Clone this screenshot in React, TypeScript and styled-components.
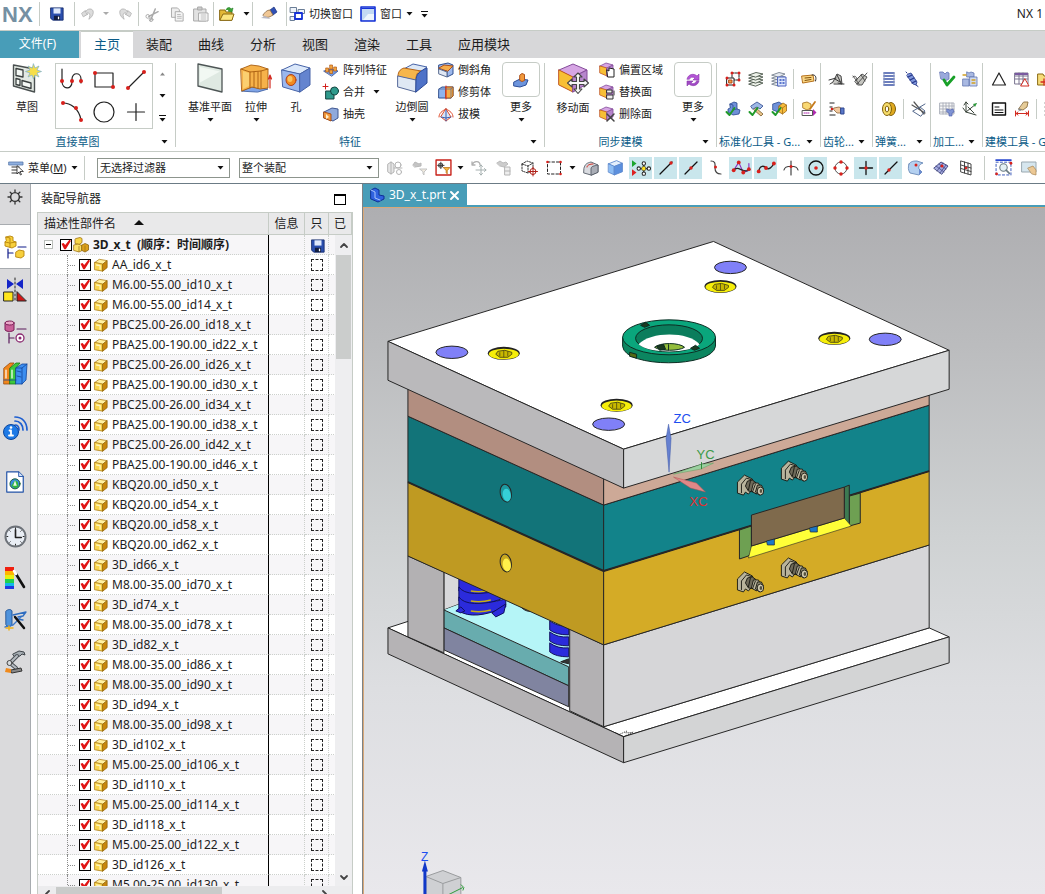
import React from "react";
import styled, { createGlobalStyle, css } from "styled-components";

const c = {
  line: "#c6ccc6",
  chrome: "#d7d7d9",
  teal: "#489db8",
  link: "#0b5c88",
  ink: "#1c1c1c",
  hot: "#c9e6ec",
};

const Global = createGlobalStyle`
  *, *::before, *::after { box-sizing: border-box; }
  body {
    margin: 0;
    background: #fff;
    color: ${c.ink};
    font: 12px/16px "Noto Sans", "Noto Sans CJK SC", sans-serif;
  }
  button, select, input { font: inherit; color: inherit; }
`;

const Shell = styled.div`
  display: flex;
  flex-direction: column;
  height: 100vh;
  overflow: hidden;
`;

const bare = css`
  border: 0;
  padding: 0;
  margin: 0;
  background: none;
  cursor: pointer;
`;

/* ---------- icons ---------- */

const Svg = styled.svg`
  display: block;
  flex: none;
  overflow: visible;
`;

const Ic = ({ s = 16, w, box = 16, boxW, children }: { s?: number; w?: number; box?: number; boxW?: number; children: React.ReactNode }) => (
  <Svg width={w ?? s} height={s} viewBox={`0 0 ${boxW ?? box} ${box}`} fill="none" strokeLinecap="round" strokeLinejoin="round" aria-hidden>
    {children}
  </Svg>
);

const Down = ({ line }: { line?: boolean }) => (
  <Svg width={7} height={line ? 7 : 4} viewBox={line ? "0 -3 7 7" : "0 0 7 4"} aria-hidden>
    {line && <path d="M0-2.5h7" stroke="#111" />}
    <path d="M0.5 0h6L3.5 3.6z" fill="#111" />
  </Svg>
);

const Up = ({ color = "#888" }: { color?: string }) => (
  <Svg width={7} height={4} viewBox="0 0 7 4" aria-hidden>
    <path d="M1 3.5h5L3.5 0.5z" fill={color} />
  </Svg>
);

const Cube = ({ top, left, right, edge }: { top: string; left: string; right: string; edge: string }) => (
  <g stroke={edge} strokeWidth=".8">
    <path d="M1.5 4.5L9 1.5l5.500 2.500L7 7z" fill={top} />
    <path d="M1.500 4.500L7 7v8l-5.500-2.500z" fill={left} />
    <path d="M7 7l7.500-3v8L7 15z" fill={right} />
  </g>
);

const Part = () => (
  <Ic s={14}>
    <path d="M1 5l5-3.500 9 1.500-5 4z" fill="#fff0a0" stroke="#b08018" strokeWidth=".9" />
    <path d="M1 5l9 2v8l-9-1.500z" fill="#f9d54c" stroke="#b08018" strokeWidth=".9" />
    <path d="M10 7l5-4v8l-5 4z" fill="#c8860c" stroke="#94680e" strokeWidth=".9" />
    <path d="M3 8l4 .8v4" stroke="#fdf3b8" strokeWidth="1.500" />
  </Ic>
);

const Assembly = ({ s = 16 }: { s?: number }) => (
  <Ic s={s}>
    <path d="M3 1.500l4-1 2 1v4l-3 2-4-1v-4z" fill="#f8d648" stroke="#a07414" strokeWidth=".8" />
    <path d="M1 8l4-1 4 1.500v5L6 15l-5-1.500z" fill="#fbe067" stroke="#a07414" strokeWidth=".8" />
    <path d="M9 8l3-1.500 3.500 1.500v5L12 15l-3-1.500z" fill="#dca01c" stroke="#8a6410" strokeWidth=".8" />
    <path d="M6 9.500v5M12 9v5" stroke="#9a7014" strokeWidth=".7" />
  </Ic>
);

const Disk = ({ s = 14 }: { s?: number }) => (
  <Ic s={s}>
    <path d="M1 1h14v14H3l-2-2z" fill="#2b4fae" stroke="#152c6b" />
    <path d="M4 1.500h8v6H4z" fill="#dfe9fb" />
    <path d="M4.500 10h7v5h-7z" fill="#111d3f" />
    <path d="M9 11h1.500v3H9z" fill="#fff" />
  </Ic>
);

const Undo = ({ flip }: { flip?: boolean }) => (
  <Ic s={14}>
    <path d={flip ? "M15 7l-4-3v2C9 1 2 1 2 6c0 3 2 6 5 8-1-3-2-6 0-7 2-1 3 0 3 1H8l5 3z" : "M1 7l4-3v2c2-5 9-5 9 0 0 3-2 6-5 8 1-3 2-6 0-7-2-1-3 0-3 1h2l-5 3z"} fill="#dcdcdc" stroke="#b4b4b4" />
  </Ic>
);

const Cut = () => (
  <Ic s={15}>
    <path d="M4 10L14 5M6 14L11 2" stroke="#a9a9a9" strokeWidth="1.500" />
    <circle cx="3" cy="10" r="2" stroke="#a9a9a9" />
    <circle cx="6.500" cy="13.500" r="2" stroke="#a9a9a9" />
  </Ic>
);
const Copy = () => (
  <Ic s={15}>
    <path d="M2 1h6l2 2v8H2z" fill="#eee" stroke="#a9a9a9" />
    <path d="M6 5h6l2 2v8H6z" fill="#f4f4f4" stroke="#a9a9a9" />
    <path d="M8 8h3M8 10h4M8 12h4" stroke="#b9b9b9" />
  </Ic>
);
const Paste = () => (
  <Ic s={16}>
    <path d="M1 3h12v12H1z" fill="#e2e2e2" stroke="#a9a9a9" />
    <path d="M5 1h4v3H5z" fill="#ccc" stroke="#a9a9a9" />
    <path d="M6 7h9v8H6z" fill="#fff" stroke="#a9a9a9" />
    <path d="M8 9h5M8 11h5M8 13h5" stroke="#b9b9b9" />
  </Ic>
);
const Folder = () => (
  <Ic s={16}>
    <path d="M1 4h5l1 2h6v8H1z" fill="#e3b936" stroke="#8a6a12" />
    <path d="M1 14l3-6h11l-2 6z" fill="#fbe680" stroke="#8a6a12" />
    <path d="M7 4c1-3 4-3 5-1l2-1-1 4-4-1 1.500-1" fill="#3ea53a" stroke="#1f7a20" strokeWidth=".6" />
  </Ic>
);
const Hand = () => (
  <Ic s={16}>
    <path d="M9 4l4-3 3 5-4 3z" fill="#2f50b4" stroke="#1a2f7a" strokeWidth=".7" />
    <path d="M2 9c2-3 4-5 7-5l3 5c-3 2-5 3-8 2z" fill="#f0c795" stroke="#7c5a35" strokeWidth=".7" />
    <path d="M0 12l10 1-6-3z" fill="#b9b9c4" />
  </Ic>
);
const SwitchWin = () => (
  <Ic s={16}>
    <path d="M1.500 1.500h6v5h-6zM9.500 3.500h6v4h-6zM1.500 10.500h4v4h-4z" fill="#eef3fa" stroke="#6a7d96" />
    <path d="M6 7h7v6H6z" fill="#fff" stroke="#1531d6" strokeWidth="1.800" />
  </Ic>
);
const WinIcon = () => (
  <Ic s={16}>
    <path d="M1 1h14v14H1z" fill="#c3d9f3" stroke="#1531d6" strokeWidth="1.600" />
    <path d="M8 8h6v6H3z" fill="#eef5fc" />
    <path d="M2 2.500h12" stroke="#1531d6" />
  </Ic>
);

const Sketch = () => (
  <Ic s={30} box={30}>
    <path d="M1.500 2l21 4v23l-21-6z" fill="#e3e9e3" stroke="#4a5050" strokeWidth="1.400" />
    <path d="M4 5.500l7 1.500v7l-7-1.500zM4 15.500l4 1v6l-4-1zM10 17.500l9 2.500v5.500l-9-2.500z" fill="#f4f8f4" stroke="#3c4141" strokeWidth="1.300" />
    <path d="M21.500 1l1.500 4 4-2-2 4 4.500 1.500-4.500 1.500 2 4-4-2-1.500 4-1.500-4-4 2 2-4-4.500-1.500 4.500-1.500-2-4 4 2z" fill="#f7de4a" stroke="#7bb0c9" strokeWidth=".7" />
  </Ic>
);
const Datum = () => (
  <Ic s={30} box={30}>
    <path d="M3 1l24 5v23L3 23z" fill="#dfe9e2" stroke="#4d5555" strokeWidth="1.300" />
    <path d="M5 4l20 4.500-20 11z" fill="#f2f8f3" />
  </Ic>
);
const Extrude = () => (
  <Ic s={30} box={30} w={32} boxW={32}>
    <path d="M2 28l9-4 17 2-10 3z" fill="#7fa4e6" stroke="#31549c" strokeWidth=".8" />
    <path d="M1 6l10-4 8 1 9 3v19l-8 1-8-2-10 4z" fill="#f6b24a" stroke="#a75c10" strokeWidth=".9" />
    <path d="M1 6l9 3 11-1 7-2M10 9v16M14 9v15M18 9v16M21 8v17" stroke="#a75c10" strokeWidth=".9" />
    <path d="M3 8l6 2v13l-6 3z" fill="#fbcf70" />
    <path d="M30 13V25M28.500 16l1.500-4 1.500 4" stroke="#d22b20" strokeWidth="1.200" />
  </Ic>
);
const Hole = () => (
  <Ic s={30} box={30}>
    <path d="M1 7l13-6 15 4-10 6z" fill="#dbe8fa" stroke="#4663a8" />
    <path d="M1 7l18 4v18L2 24z" fill="#9bb7ee" stroke="#4663a8" />
    <path d="M19 11l10-6v17l-10 7z" fill="#6484cf" stroke="#4663a8" />
    <ellipse cx="10" cy="17" rx="5" ry="5.500" fill="#f28a20" stroke="#b0411a" />
    <ellipse cx="9" cy="16" rx="2.500" ry="3" fill="#fbc35e" />
  </Ic>
);
const Blend = () => (
  <Ic s={30} box={30} w={31} boxW={31}>
    <path d="M3 8l13-7 14 3-9 7z" fill="#dde8f6" stroke="#4663a8" />
    <path d="M1 13c0-5 3-7 6-8l17 3c-4 1-5 4-5 9z" fill="#f6b64c" stroke="#b5651a" />
    <path d="M1 13l18 4v12L1 24z" fill="#dfe8f4" stroke="#55699a" />
    <path d="M19 17c0-6 4-9 11-12v15l-11 9z" fill="#4e72c8" stroke="#2b4995" />
  </Ic>
);
const MoveFace = () => (
  <Ic s={31} box={31}>
    <path d="M1 7l14-6 14 6-14 7z" fill="#d6a5e4" stroke="#844b9a" />
    <path d="M1 7l14 7v15L1 22z" fill="#f7bf35" stroke="#c2571c" />
    <path d="M15 14l14-7v14l-14 8z" fill="#b685cc" stroke="#844b9a" />
    <path d="M20 10l4 4h-2.500v4.500H26V16l4.500 4-4.500 4v-2.500h-4.500V26H24l-4 4.500L16 26h2.500v-4.500H14V24l-4.500-4 4.500-4v2.500h4.500V14H16z" fill="#f7f7f7" stroke="#444" strokeWidth="1.100" />
  </Ic>
);
const MoreFeature = () => (
  <Ic s={16}>
    <path d="M1 10l6-3 8 1-2 5-6 2-6-1z" fill="#6c94dc" stroke="#2c4e98" />
    <path d="M7 3l2-1.500 2.500 1v6L9 9.500 7 8.500z" fill="#f29a3c" stroke="#b0521a" />
  </Ic>
);
const MoreSync = () => (
  <Ic s={16}>
    <path d="M2 7c1-5 7-6 10-3l2-2v6H8l2-2C8 4.500 5 5 4.500 7z" fill="#b455d6" stroke="#8a35ad" strokeWidth=".6" />
    <path d="M14 9c-1 5-7 6-10 3l-2 2V9h6l-2 2c2 1.500 5 0 5.500-2z" fill="#a049c4" stroke="#8a35ad" strokeWidth=".6" />
  </Ic>
);
const Pattern = () => (
  <Ic s={16}>
    <path d="M1 9l7-2 7 2-6 5z" fill="#6f98e2" stroke="#33539b" strokeWidth=".8" />
    <path d="M3 6h2.500v4H3zM7 3h2.500v4H7zM11 5h2.500v4H11zM7 8h2.500v3.500H7z" fill="#f3a43c" stroke="#b25a14" strokeWidth=".7" />
  </Ic>
);
const Unite = () => (
  <Ic s={16}>
    <path d="M3 7h8v8H3z" fill="#2f9a8c" stroke="#14433e" />
    <circle cx="11.500" cy="7" r="4" fill="#2f9a8c" stroke="#14433e" />
    <path d="M2.500 0v5M0 2.500h5" stroke="#d2201c" />
  </Ic>
);
const ShellIc = () => (
  <Ic s={16}>
    <path d="M1 6l8-4 6 1v9l-5 3-9-3z" fill="#8fa9dc" stroke="#3e5691" />
    <path d="M1 6l7 2v7l-7-3z" fill="#f39a3c" stroke="#a8501a" />
    <path d="M3 8l3 3-3 2z" fill="#fff0d0" />
  </Ic>
);
const Chamfer = () => (
  <Ic s={16}>
    <path d="M1 3l9-2 5 2v9l-6 3V9L1 8z" fill="#9db8ec" stroke="#31508f" />
    <path d="M1 6l5-3 9 1-5 5z" fill="#f6ad4c" stroke="#ad4f16" />
    <path d="M1 7l8 3v5l-8-3z" fill="#dfe7f4" stroke="#5b6d92" />
  </Ic>
);
const Trim = () => (
  <Ic s={16}>
    <path d="M1 5l3-2h11v9l-2 2H1z" fill="#8fb4ee" stroke="#31508f" />
    <path d="M8 3h7v9l-2 2H8z" fill="#f4ad48" stroke="#ad5a16" />
    <path d="M8 2v13" stroke="#d22" />
    <path d="M1 5h12l2-2M13 5v9" stroke="#55699a" strokeWidth=".7" />
  </Ic>
);
const Draft = () => (
  <Ic s={16}>
    <path d="M8 3l5 8-5 4-5-4z" fill="#d8e6f8" stroke="#e04b2a" />
    <path d="M8 3v12M3 11l5 1 5-1" stroke="#3a5fb0" />
    <path d="M1 11c0-4 3-6 7-8M15 11c0-4-3-6-7-8" stroke="#e04b2a" />
  </Ic>
);
const SyncCube = ({ kind }: { kind: "offset" | "replace" | "delete" }) => (
  <Ic s={16}>
    <path d="M1 4l6-3 7 2-6 3z" fill="#d6a5e4" stroke="#844b9a" strokeWidth=".8" />
    <path d="M1 4l7 2v8l-7-3z" fill="#f7bf35" stroke="#c2571c" strokeWidth=".8" />
    <path d="M8 6l6-3v8l-6 3z" fill="#b685cc" stroke="#844b9a" strokeWidth=".8" />
    {kind === "offset" && <path d="M8 8l2 1V6l5 1v8H9z" fill="#fff" stroke="#222" />}
    {kind === "replace" && <path d="M8 6h5v3H8zM8 11h6v4H8zM15 7v4" fill="#eee" stroke="#333" />}
    {kind === "delete" && <path d="M8 8l7 7M15 8l-7 7" stroke="#444" strokeWidth="1.500" />}
  </Ic>
);

const dot = (x: number, y: number, r = 1.7) => <circle cx={x} cy={y} r={r} fill="#d8201c" />;

const sketchTools: [string, React.ReactNode][] = [
  ["轮廓", <Ic s={24} box={24}><path d="M2 1v12c0 9 10 9 10 1v-3c0-7 9-7 9 0v4" stroke="#222" strokeWidth="1.200" />{dot(2, 13, 2)}{dot(12, 13, 2)}{dot(21, 13, 2)}</Ic>],
  ["矩形", <Ic s={24} box={24}><path d="M3 5h18v14H3z" stroke="#222" strokeWidth="1.200" />{dot(3, 5, 2)}{dot(21, 19, 2)}</Ic>],
  ["直线", <Ic s={24} box={24}><path d="M4 20L20 4" stroke="#222" strokeWidth="1.200" />{dot(4, 20, 2)}{dot(20, 4, 2)}</Ic>],
  ["圆弧", <Ic s={24} box={24}><path d="M3 3c7 0 16 5 18 17" stroke="#222" strokeWidth="1.200" />{dot(3, 3, 2)}{dot(16, 8, 2)}{dot(21, 20, 2)}</Ic>],
  ["圆", <Ic s={24} box={24}><circle cx="12" cy="12" r="10" stroke="#222" strokeWidth="1.200" /></Ic>],
  ["点", <Ic s={24} box={24}><path d="M12 3.500v17M3.500 12h17" stroke="#222" strokeWidth="1.200" /></Ic>],
];

const tick = <path d="M1.500 11l3 3 5-7" stroke="#1f9a2a" strokeWidth="2" />;

const tool: Record<string, React.ReactNode> = {
  assemblyFrame: <Ic><path d="M7 2h7v7H7z" stroke="#222" strokeDasharray="2 1" /><path d="M2 7h7v7H2z" fill="#fff" stroke="#222" /><path d="M4 9h3v3H4z" fill="#f5a33c" stroke="#b5471a" />{dot(7, 2, 1.500)}{dot(14, 2, 1.500)}{dot(14, 9, 1.500)}{dot(2, 7, 1.500)}{dot(2, 14, 1.500)}{dot(9, 14, 1.500)}</Ic>,
  layers: <Ic>{[9, 6, 3, 0].map((y) => <path key={y} d={`M1 ${4 + y}l7-2.500 7 1.500-7 3z`} fill="#eef2ea" stroke="#4a564a" strokeWidth=".9" />)}</Ic>,
  layerDoc: <Ic>{[9, 6, 3, 0].map((y) => <path key={y} d={`M1 ${4 + y}l7-2.500 6 1.500-6 3z`} fill="#e6eaf0" stroke="#77818f" strokeWidth=".9" />)}<path d="M7 6h8v9H7z" fill="#dfe8fb" stroke="#4c63c0" /><path d="M9 9h1M12 9h1M9 12h1M12 12h1" stroke="#3050c0" strokeWidth="1.500" /></Ic>,
  tag: <Ic><path d="M1 5l11-1 1 6-11 2z" fill="#fbd782" stroke="#b5701c" /><path d="M4 7l6-.5M4 9.500l6-1" stroke="#80500e" /><path d="M11 4c3-1 5 2 3.500 6" stroke="#333" /></Ic>,
  blockCheck: <Ic><path d="M5 3l4-2 3 1v6l3 1-1 4-6 1-5-3V8l2-1z" fill="#6f90d8" stroke="#26458e" strokeWidth=".8" /><path d="M5 3l3 1v5l4-1" stroke="#26458e" strokeWidth=".7" />{tick}</Ic>,
  hammerCheck: <Ic><path d="M3 5l6-4 6 4-3 3-3-2-4 2z" fill="#9db8e6" stroke="#4c63a0" /><path d="M8 7l7 6-2 2-7-6z" fill="#e7c48a" stroke="#7a5a2a" strokeWidth=".8" />{tick}</Ic>,
  cubesCheck: <Ic><path d="M2 3l6-2 3 2v6l-4 2-5-2z" fill="#6f90d8" stroke="#26458e" strokeWidth=".8" /><path d="M8 5l4-3 3.500 2v6l-4 3L8 11z" fill="#f6bc3c" stroke="#a06a14" strokeWidth=".8" /><path d="M8 5l3.500 2 4-3M11.500 7v6" stroke="#a06a14" strokeWidth=".7" />{tick}</Ic>,
  cubeEdit: <Ic><path d="M2 2l4-1 4 2v4L6 9 2 7z" fill="#f9d873" stroke="#a06a14" strokeWidth=".8" /><path d="M9 8l5-7" stroke="#c67a1c" strokeWidth="1.800" /><path d="M1.500 9.500h10v5h-10z" fill="#fff" stroke="#555" /><path d="M3 12h6" stroke="#b02bb0" strokeDasharray="1 1" /><path d="M12 8v7l3.500-3.500z" fill="#b02bb0" /></Ic>,
  gear1: <Ic><path d="M1 13l3-2 4-8 4 2 1 8-4-1" fill="#c8c8c4" stroke="#444" /><path d="M0 9l7-2M5 13h10M8 4l4 8M6 8l5 3" stroke="#333" /></Ic>,
  gear2: <Ic><path d="M3 10L10 3l5 3-5 8-4 0z" fill="#c5c5c0" stroke="#444" strokeWidth=".9" /><path d="M1 5l6 8M5 13l10-11M9 4l4 6M1 6c2-2 4 0 4 3" stroke="#444" strokeWidth=".9" /></Ic>,
  handList: <Ic><path d="M1 2h4M1 6h2M1 10h2M1 14h5" stroke="#222" strokeLinecap="square" />{dot(3, 8, 1.300)}<path d="M5 7l5-1 2 1v5H8L5 9z" fill="#f2caa0" stroke="#8a6238" strokeWidth=".8" /><path d="M12 7h3v6h-3z" fill="#5a78c8" stroke="#2e4790" /></Ic>,
  coil: <Ic>{[2, 5, 8, 11, 14].map((y) => <path key={y} d={`M3 ${y}h10`} stroke="#3e55a8" strokeWidth="1.600" />)}<path d="M3 2v12M13 2v12" stroke="#8694c0" /></Ic>,
  damper: <Ic><path d="M4 3l3-1 6 9-1 3-3-1-6-8z" fill="#7f96dc" stroke="#26388a" strokeWidth=".8" /><path d="M4 6l4-2M6 9l4-2M8 12l4-2" stroke="#26388a" strokeWidth="1.200" /><path d="M3 2l-1-1M12 14l2 1.500" stroke="#26388a" /></Ic>,
  springGold: <Ic><ellipse cx="10" cy="8" rx="4.500" ry="6.500" fill="#e0aa20" stroke="#80600c" /><ellipse cx="6" cy="8" rx="4.500" ry="6.500" fill="#f6dc6a" stroke="#80600c" /><ellipse cx="6" cy="8" rx="1.700" ry="3" fill="#fff" stroke="#80600c" /></Ic>,
  springCut: <Ic><path d="M1 4l13 8M3 1l10 12" stroke="#555" strokeWidth="1.200" /><path d="M2 10l7-4 5 4-4 5z" stroke="#54688c" /><path d="M9 6l5-3" stroke="#54688c" /></Ic>,
  bigCheck: <Ic><path d="M1 1h3l2 2 2-2 2 1v6l-4 2-4-2z" fill="#9aa9dc" stroke="#6272b4" strokeWidth=".8" /><path d="M5 9l3 5 7-8" stroke="#18a028" strokeWidth="2.800" /></Ic>,
  process: <Ic><path d="M5 1l2 1 2-1 3 1v4H5zM1 8h6v7H1z" fill="#a9b9e2" stroke="#5f74b0" strokeWidth=".8" /><path d="M8 6h7v9H8z" fill="#cfdaf0" stroke="#5f74b0" strokeWidth=".8" /><path d="M1 4h3M10 9h3M10 12h3" stroke="#d2a020" strokeWidth="1.300" /></Ic>,
  gridPart: <Ic><path d="M1 2h14v11H1zM1 5h14M1 8h14M1 11h14M4 2v11M7 2v11M10 2v11M13 2v11" fill="#f8f8f8" stroke="#a8adb8" strokeWidth=".9" /><path d="M8 8l3 1 3-1 1 3-2 1v3h-3v-3l-2-1z" fill="#7f93d4" stroke="#4a5ca8" strokeWidth=".6" /></Ic>,
  axes: <Ic><path d="M4 1v10l10 3M4 11l10-8M2 4l2-3 2 2M4 11l-3-4M6 6l6 6" stroke="#3a443a" /><path d="M11 3l4-1-2 4z" fill="#2b9a3a" /></Ic>,
  triangle: <Ic><path d="M8 2l6.500 12h-13z" stroke="#222" strokeWidth="1.200" /></Ic>,
  tableTri: <Ic><path d="M1 2h13v11H1zM1 5h13M1 8h13M5 2v11M9 2v11" fill="#fff" stroke="#7a7490" /><path d="M1 2h13v2H1z" fill="#7a5aa0" /><path d="M11 8l4 7H7z" fill="#fff" stroke="#d22b20" /></Ic>,
  folderPlus: <Ic><path d="M1 3h5l1 2h8v9H1z" fill="#f7dc7a" stroke="#8a6a12" /><path d="M7 8v6M4 11h6" stroke="#d22b20" strokeWidth="1.300" /></Ic>,
  note: <Ic><path d="M1.500 2h13v12h-13z" fill="#fff" stroke="#111" strokeWidth="1.400" /><path d="M4 6h4M4 9h8M4 11.500h8" stroke="#111" /></Ic>,
  brush: <Ic><path d="M10 1l4 0-1 5-4 3-4-1z" fill="#e6cc98" stroke="#8d7040" strokeWidth=".9" /><path d="M5 7l3 2-2 1-2-1z" fill="#888" /><path d="M1.500 10v5M14.500 10v5M2 12.500h12M4 11l-2 1.500L4 14M12 11l2 1.500-2 1.500" stroke="#d22b20" /></Ic>,
  tree: <Ic><path d="M1 2h3M1 6h3M1 10h3M1 14h3" stroke="#222" /></Ic>,

  menu: <Ic><path d="M1 2h14v3H1z" fill="#8fb0e0" stroke="#5577aa" strokeWidth=".8" /><path d="M4 7h7M4 10h6M4 13h6" stroke="#777" strokeWidth="1.400" /><path d="M9 6v8l2-2 1.500 3 1-.5-1.500-3h3z" fill="#fff" stroke="#222" strokeWidth=".8" /></Ic>,
  selParts: <Ic><path d="M1 4l3-2 3 2v8l-3 2-3-2zM4 2v12" fill="#e6e6e6" stroke="#b4b4b4" /><circle cx="11" cy="5" r="3" stroke="#b4b4b4" /><circle cx="12" cy="12" r="2.500" stroke="#b4b4b4" /><path d="M7 8h8" stroke="#b4b4b4" /></Ic>,
  selFunnel: <Ic><path d="M1 5l2-3 4 2 2-1v3l-6 1z" fill="#c4c4c4" stroke="#b8b8b8" /><path d="M8 9h7l-3 3v3l-1-1v-2z" fill="#f2ece0" stroke="#c4c4c4" /></Ic>,
  selBox: <Ic s={17}><path d="M1 1h14v14H1z" fill="#fff" stroke="#c82018" strokeWidth="1.300" /><path d="M5.500 3v6M2.500 6h6M4 4.500h3v3H4z" stroke="#333" strokeWidth=".9" /><path d="M8 8h6l-2.500 3v3l-1-1v-2z" fill="#f6b63c" stroke="#b86f14" strokeWidth=".7" /></Ic>,
  rotMove: <Ic><path d="M1 5c2-5 8-4 8 0M1 2v3h3" stroke="#b0b0b0" strokeWidth="1.300" /><path d="M10 5v10M5 10h10M8.500 6.500L10 5l1.500 1.500M8.500 13.500L10 15l1.500-1.500M13.500 8.500L15 10l-1.500 1.500" stroke="#a6b0b0" /></Ic>,
  gridMove: <Ic><path d="M1 3l3-2 3 2 3-1 2 2-4 3-4-1z" fill="#ccc" stroke="#bbb" /><path d="M9 7h5v8H9zM9 11h5" fill="#eee" stroke="#b4b4b4" /></Ic>,
  cubeTarget: <Ic><path d="M1 4l5-3 6 2v7l-5 3-6-2zM1 4l6 2v7M7 6l5-3" stroke="#222" strokeWidth=".9" strokeDasharray="1.500 1.300" /><circle cx="12" cy="11.500" r="3" fill="#fff" stroke="#b02018" /><path d="M12 7v9M7.500 11.500h9" stroke="#b02018" /></Ic>,
  marquee: <Ic><path d="M1.500 2h13v12h-13z" stroke="#222" strokeDasharray="2.500 2" />{dot(1.500, 2, 1.300)}{dot(14.500, 2, 1.300)}{dot(14.500, 14, 1.300)}</Ic>,
  faceGray: <Ic><path d="M1 8c1-4 3-5 7-6l7 3v7l-7 3-7-2z" fill="#d9dbe0" stroke="#555b66" strokeWidth=".9" /><path d="M8 15V9c0-3 3-3 7-4v7z" fill="#a9adb6" stroke="#555b66" strokeWidth=".9" /><path d="M4 7c0-2 3-3 6-3" stroke="#d22b20" /></Ic>,
  cubeBlue: <Ic s={17}><Cube top="#e4effc" left="#8dbdf4" right="#5c90de" edge="#5a86cc" /></Ic>,
  snapAll: <Ic s={18}><path d="M0 1l4 3-4 3z" fill="#1aa52c" /><path d="M0 9l4 3-4 3z" fill="#d22" /><path d="M6 8.500h9M10.500 4v9" stroke="#111" /><circle cx="10.500" cy="8.500" r="2" fill="#ffe11c" stroke="#444" strokeWidth=".6" /><g stroke="#222" strokeWidth=".9" fill="#fff"><circle cx="10.500" cy="4" r="1.500" /><circle cx="10.500" cy="13" r="1.500" /><circle cx="6" cy="8.500" r="1.500" /><circle cx="15" cy="8.500" r="1.500" /></g></Ic>,
  snapEnd: <Ic><path d="M2 14L14 2" stroke="#111" strokeWidth="1.200" />{dot(13, 3)}</Ic>,
  snapMid: <Ic><path d="M2 14L14 2" stroke="#111" strokeWidth="1.200" />{dot(8, 8)}</Ic>,
  snapTan: <Ic><path d="M3 1c5 0 4 4 4 7s1 6 6 6" stroke="#444" strokeWidth="1.200" />{dot(7.500, 7, 1.500)}</Ic>,
  snapPole: <Ic s={18}><path d="M1.500 10L6 3l4 9 5-2V4" stroke="#8a30c0" /><path d="M1.500 10c4-5 8 3 13.500 0" stroke="#222" strokeWidth="1.200" />{dot(1.500, 10)}{dot(6, 3)}{dot(10, 12)}{dot(15, 9)}</Ic>,
  snapSpline: <Ic s={18}><path d="M1.500 11c1-6 5-5 7-3s5-1 6.500-4" stroke="#222" strokeWidth="1.200" />{dot(1.500, 11)}{dot(8, 8)}{dot(15, 4)}</Ic>,
  snapCross: <Ic><path d="M8 1v14M1 10c1-5 13-5 14 0" stroke="#444" strokeWidth="1.200" />{dot(8, 6.500, 1.500)}</Ic>,
  snapCenter: <Ic><circle cx="8" cy="8" r="7" stroke="#111" strokeWidth="1.300" />{dot(8, 8, 1.800)}</Ic>,
  snapQuad: <Ic><circle cx="8" cy="8" r="6" stroke="#555" />{dot(8, 2)}{dot(14, 8)}{dot(8, 14)}{dot(2, 8)}</Ic>,
  snapPoint: <Ic><path d="M8 1.500v13M1.500 8h13" stroke="#111" strokeWidth="1.300" />{dot(8, 8)}</Ic>,
  snapOnCurve: <Ic><path d="M2 14L14 2" stroke="#111" strokeWidth="1.200" />{dot(6, 10)}</Ic>,
  surface: <Ic><path d="M1 4c2-3 5-3 8-3l6 2c-3 1-5 3-4 6l3 3-3 3-9-2c-2-3-2-6-1-9z" fill="#b4d0f0" stroke="#6a8ab8" strokeWidth=".9" /><path d="M11 9l3 3-3 3z" fill="#6a8ad0" />{dot(8, 5, 1.500)}</Ic>,
  mesh: <Ic><path d="M1 8l7-6 7 4-6 8z" fill="#a4aae0" stroke="#3a3f7a" strokeWidth=".9" /><path d="M3 6l8 6M6 4l7 5M4 11l6-8M7 13l6-8" stroke="#3a3f7a" strokeWidth=".7" />{dot(9, 6, 1.500)}</Ic>,
  grid: <Ic><path d="M3 1l10 3v11L3 12zM3 5l10 3M3 8.500l10 3M6.500 2v11M10 3v11" stroke="#333" strokeWidth=".9" /><circle cx="8" cy="8" r="1.300" fill="#d22" /></Ic>,
  search: <Ic s={17}><path d="M1 1h14" stroke="#2a49d0" strokeWidth="1.600" /><path d="M1 3h14v12H1z" stroke="#3454b8" strokeWidth=".9" strokeDasharray="2 2" /><circle cx="8" cy="8" r="3.500" fill="#e4f0f4" stroke="#6a7a80" /><path d="M10.500 10.500l3 3" stroke="#6a7a80" strokeWidth="1.500" />{dot(15, 4, 1.300)}{dot(1.500, 14, 1.300)}</Ic>,
  picture: <Ic><path d="M1 2h14v10H1z" fill="#d6e6ee" stroke="#9aa8b0" /><path d="M7 8l5-2 3 4v5l-4-1z" fill="#ecc894" stroke="#a88450" strokeWidth=".7" /></Ic>,
};

/* ---------- title bar ---------- */

const TitleBar = styled.header`
  display: flex;
  align-items: center;
  flex: none;
  height: 31px;
  padding-bottom: 2px;
  border-bottom: 1px solid ${c.line};
  white-space: nowrap;
  overflow: hidden;
`;
const Logo = styled.span`
  flex: none;
  width: 39px;
  padding: 2px 0 0 2px;
  font: 700 22px/28px "Liberation Sans", sans-serif;
  color: #7590a3;
`;
const Rule = styled.span<{ $h?: number; $m?: number }>`
  flex: none;
  width: 1px;
  height: ${(p) => p.$h ?? 24}px;
  margin: 0 ${(p) => p.$m ?? 0}px;
  background: ${c.line};
`;
const QuickButton = styled.button<{ $w: number }>`
  ${bare}
  display: flex;
  align-items: center;
  justify-content: center;
  flex: none;
  width: ${(p) => p.$w}px;
  height: 26px;
`;
const QuickText = styled.button`
  ${bare}
  display: flex;
  align-items: center;
  gap: 4px;
  padding-right: 7px;
  font-size: 11px;
`;
const AppName = styled.span`
  margin-left: auto;
  padding-right: 2px;
`;

/* ---------- tabs ---------- */

const TabBar = styled.nav`
  display: flex;
  flex: none;
  height: 27px;
  background: ${c.chrome};
`;
const FileTab = styled.button`
  ${bare}
  width: 79px;
  margin-right: 2px;
  padding: 0 4px 2px 0;
  background: ${c.teal};
  color: #fff;
  font-size: 12px;
`;
const Tab = styled.button<{ $on?: boolean }>`
  ${bare}
  padding: 0 13px 2px;
  font-size: 13px;
  line-height: 24px;
  border-top: 1px solid transparent;
  ${(p) =>
    p.$on &&
    css`
      background: #fff;
      border-top-color: ${c.line};
      color: ${c.link};
    `}
`;

/* ---------- ribbon ---------- */

const Ribbon = styled.section`
  display: flex;
  flex: none;
  height: 94px;
  padding-top: 1px;
  border-bottom: 1px solid ${c.line};
  overflow: hidden;
  font-size: 11px;
`;
const GroupBox = styled.div<{ $w: number }>`
  display: flex;
  flex-direction: column;
  flex: 0 0 ${(p) => p.$w}px;
  width: ${(p) => p.$w}px;
  background: linear-gradient(${c.line}, ${c.line}) right 4px / 1px 84px no-repeat;
`;
const GroupBody = styled.div<{ $pad: number }>`
  display: flex;
  align-items: flex-start;
  height: 75px;
  padding-left: ${(p) => p.$pad}px;
`;
const GroupFoot = styled.div<{ $left?: boolean }>`
  display: flex;
  align-items: center;
  height: 16px;
  color: ${c.link};
  white-space: nowrap;
  span {
    flex: 1;
    min-width: 0;
    padding-left: 2px;
    text-align: ${(p) => (p.$left ? "left" : "center")};
  }
`;
const FootButton = styled.button`
  ${bare}
  display: flex;
  align-items: center;
  justify-content: center;
  flex: none;
  width: 23px;
  height: 16px;
`;
const BigButton = styled.button<{ $w: number }>`
  ${bare}
  display: flex;
  flex-direction: column;
  align-items: center;
  flex: none;
  width: ${(p) => p.$w}px;
  padding-top: 4px;
  white-space: nowrap;
  line-height: 16px;
  .label { margin: 6px 0 3px; }
`;
const MoreBox = styled.span`
  display: flex;
  align-items: center;
  justify-content: center;
  width: 38px;
  height: 35px;
  margin: -1px 0 -4px;
  border: 1px solid ${c.line};
  border-radius: 4px;
`;
const Gallery = styled.div`
  display: grid;
  grid-template: repeat(2, 32px) / repeat(3, 32px);
  margin: 4px 0 0 10px;
  border: 1px solid ${c.line};
`;
const GalleryButton = styled.button`
  ${bare}
  display: grid;
  place-items: center;
`;
const GalleryScroll = styled.div`
  display: flex;
  flex-direction: column;
  padding-top: 4px;
`;
const ScrollButton = styled.button`
  ${bare}
  display: grid;
  place-items: center;
  width: 19px;
  height: 22px;
`;
const SmallCol = styled.div<{ $l: number; $w: number }>`
  flex: 0 0 ${(p) => p.$w}px;
  margin-left: ${(p) => p.$l}px;
`;
const SmallButton = styled.button`
  ${bare}
  display: flex;
  align-items: center;
  gap: 4px;
  height: 22px;
  white-space: nowrap;
  svg + svg, span + svg { margin-left: 4px; }
`;
const ToolGrid = styled.div`
  padding-top: 5px;
`;
const ToolRow = styled.div`
  display: flex;
  align-items: center;
  height: 30px;
`;
const ToolButton = styled.button`
  ${bare}
  display: grid;
  place-items: center;
  flex: none;
  width: 23px;
  height: 24px;
`;

const Group = ({ name, w, pad = 4, left, children }: { name: string; w: number; pad?: number; left?: boolean; children: React.ReactNode }) => (
  <GroupBox $w={w}>
    <GroupBody $pad={pad}>{children}</GroupBody>
    <GroupFoot $left={left}>
      <span>{name}</span>
      <FootButton aria-label={`${name} 选项`}><Down /></FootButton>
    </GroupFoot>
  </GroupBox>
);
const Big = ({ icon, label, w, arrow }: { icon: React.ReactNode; label: string; w: number; arrow?: boolean }) => (
  <BigButton $w={w}>
    {icon}
    <span className="label">{label}</span>
    {arrow && <Down />}
  </BigButton>
);
const Small = ({ icon, label, arrow }: { icon: React.ReactNode; label: string; arrow?: boolean }) => (
  <SmallButton>
    {icon}
    <span>{label}</span>
    {arrow && <Down />}
  </SmallButton>
);
const Tools = ({ rows }: { rows: string[][] }) => (
  <ToolGrid>
    {rows.map((row, i) => (
      <ToolRow key={i}>
        {row.map((name, j) => (name === "|" ? <Rule key={j} $h={20} $m={3} /> : <ToolButton key={j} aria-label={name}>{tool[name]}</ToolButton>))}
      </ToolRow>
    ))}
  </ToolGrid>
);

/* ---------- selection bar ---------- */

const SelectionBar = styled.div`
  display: flex;
  align-items: center;
  flex: none;
  height: 32px;
  padding-left: 8px;
  border-bottom: 1px solid #6b7b85;
  overflow: hidden;
  font-size: 11px;
`;
const MenuButton = styled.button`
  ${bare}
  display: flex;
  align-items: center;
  gap: 4px;
  flex: none;
  width: 76px;
  white-space: nowrap;
`;
const Picker = styled.label<{ $w: number; $l: number }>`
  position: relative;
  flex: 0 0 ${(p) => p.$w}px;
  margin-left: ${(p) => p.$l}px;
  select {
    appearance: none;
    width: 100%;
    height: 20px;
    padding: 0 20px 0 2px;
    border: 1px solid #8d958d;
    border-radius: 0;
    background: #fff;
    line-height: 18px;
  }
  svg {
    position: absolute;
    right: 6px;
    top: 8px;
    pointer-events: none;
  }
`;
const Snaps = styled.div`
  display: flex;
  align-items: center;
  gap: 2px;
  margin-left: 4px;
`;
const SnapButton = styled.button<{ $on?: boolean; $w?: number }>`
  ${bare}
  display: grid;
  place-items: center;
  flex: none;
  width: ${(p) => p.$w ?? 23}px;
  height: 22px;
  background: ${(p) => (p.$on ? c.hot : "none")};
`;

const snapItems: [string, boolean?][] = [
  ["snapAll", true], ["snapEnd", true], ["snapMid", true], ["snapTan"], ["snapPole", true], ["snapSpline", true],
  ["snapCross"], ["snapCenter", true], ["snapQuad"], ["snapPoint", true], ["snapOnCurve", true], ["surface"], ["mesh"], ["grid"],
];

/* ---------- body ---------- */

const Body = styled.div`
  display: flex;
  flex: 1;
  min-height: 0;
`;
const Rail = styled.nav`
  display: flex;
  flex-direction: column;
  flex: 0 0 30px;
  border-right: 1px solid #a8acb0;
  background: #dadadc;
`;
const RailButton = styled.button<{ $h?: number; $gap?: number; $on?: boolean }>`
  ${bare}
  display: grid;
  place-items: center;
  flex: none;
  height: ${(p) => p.$h ?? 42}px;
  margin-top: ${(p) => p.$gap ?? 0}px;
  ${(p) =>
    p.$on &&
    css`
      width: 30px;
      background: #fff;
      border: solid #a8acb0;
      border-width: 1px 0;
    `}
`;
const Panel = styled.aside`
  display: flex;
  flex-direction: column;
  flex: 0 0 331px;
  padding: 0 9px 0 6px;
  min-height: 0;
`;
const PanelHead = styled.div`
  display: flex;
  align-items: center;
  justify-content: space-between;
  flex: none;
  height: 28px;
  padding: 2px 7px 0 4px;
  h2 { margin: 0; font: inherit; }
`;
const Maximize = styled.button`
  ${bare}
  width: 12px;
  height: 11px;
  border: 1px solid #000;
  border-top-width: 2px;
`;
const TreeFrame = styled.div`
  position: relative;
  display: flex;
  flex-direction: column;
  flex: 1;
  min-height: 0;
  border: 1px solid ${c.line};
  border-bottom: 0;
`;
const TreeClip = styled.div`
  flex: 1;
  min-height: 0;
  overflow: hidden;
`;
const Tree = styled.table`
  width: 100%;
  table-layout: fixed;
  border-collapse: separate;
  border-spacing: 0;
  th, td { padding: 0; height: 20px; }
  th {
    height: 22px;
    padding: 1px 0 0;
    background: #e9e9ea;
    border-right: 1px solid ${c.line};
    border-bottom: 1px solid ${c.line};
    font-weight: 400;
    white-space: nowrap;
  }
  th:first-child { padding-left: 6px; text-align: left; }
  th svg { display: inline-block; margin: 0 0 3px 18px; }
  td { border-bottom: 1px dotted #ccd0cc; border-right: 1px dotted #ccd0cc; }
  td:first-child { border-right: 1px solid #000; }
  td:last-child { border-right: 0; }
  tbody tr:nth-child(odd) { background: #f7f6f8; }
`;
const NameCell = styled.div`
  display: flex;
  align-items: center;
  height: 19px;
  white-space: nowrap;
`;
const Minus = styled.button`
  ${bare}
  position: relative;
  width: 9px;
  height: 9px;
  margin: 0 7px 0 6px;
  border: 1px solid #b9bdb9;
  background: #fff;
  &::after {
    content: "";
    position: absolute;
    inset: 3px 1px auto;
    height: 1px;
    background: #000;
  }
`;
const Elbow = styled.span`
  width: 9px;
  height: 20px;
  margin: 0 3px 0 29px;
  border-left: 1px dotted #8c8c8c;
  background: repeating-linear-gradient(90deg, #8c8c8c 0 1px, transparent 1px 2px) 0 10px / 9px 1px no-repeat;
`;
const Check = styled.input.attrs({ type: "checkbox" })`
  appearance: none;
  flex: none;
  position: relative;
  width: 12px;
  height: 12px;
  margin: 0 3px 0 0;
  border: 1px solid #000;
  background: #fff;
  &:checked::after {
    content: "";
    position: absolute;
    inset: 0;
    background: #e01414;
    clip-path: polygon(5% 42%, 26% 36%, 42% 54%, 84% 2%, 100% 12%, 48% 98%, 32% 98%);
  }
`;
const PartLabel = styled.label<{ $root?: boolean }>`
  display: flex;
  align-items: center;
  gap: 4px;
  font-weight: ${(p) => (p.$root ? 700 : 400)};
  margin-left: ${(p) => (p.$root ? -2 : 0)}px;
`;
const Slot = styled.span<{ $disk?: boolean }>`
  display: grid;
  place-items: center;
  width: 12px;
  height: 12px;
  margin: 0 auto;
  border: ${(p) => (p.$disk ? 0 : 1)}px dashed #222;
`;
const VScroll = styled.div`
  position: absolute;
  top: 22px;
  right: 0;
  bottom: 8px;
  width: 17px;
  padding: 1px;
  display: flex;
  flex-direction: column;
  align-items: center;
  background: #eeeef0;
  &::before {
    content: "";
    order: 1;
    width: 15px;
    height: 104px;
    background: #cbcdcc;
  }
`;
const Arrow = styled.button`
  ${bare}
  display: grid;
  place-items: center;
  width: 16px;
  height: 19px;
  &:last-child { order: 2; margin-top: auto; height: 16px; }
`;
const HScroll = styled.div`
  display: flex;
  flex: none;
  height: 8px;
  padding-left: 1px;
  background: #ececee;
  overflow: hidden;
  &::before {
    content: "";
    order: 1;
    width: 166px;
    margin-top: 1px;
    background: #c9cbca;
  }
`;
const HArrow = styled.button`
  ${bare}
  width: 17px;
  height: 16px;
  display: grid;
  place-items: center;
  &:last-child { order: 2; margin: 0 20px 0 auto; }
`;
const Workspace = styled.main`
  display: flex;
  flex-direction: column;
  flex: 1;
  min-width: 0;
  border-left: 1px solid #7c8286;
`;
const DocTabs = styled.div`
  display: flex;
  flex: none;
  height: 23px;
  border-bottom: 2px solid ${c.teal};
`;
const DocTab = styled.div`
  display: flex;
  align-items: center;
  gap: 4px;
  width: 104px;
  height: 22px;
  padding-left: 6px;
  background: ${c.teal};
  color: #fff;
  button { ${bare} color: #fff; line-height: 0; }
`;
const Canvas = styled.div`
  flex: 1;
  min-height: 0;
  background: linear-gradient(#aeaeb1 0, #bbbcbe 20%, #cfd2d3 48%, #dddee1 70%, #e9e8ec 100%);
  border-left: 1px solid #d8a878;
  border-top: 1px solid #d8a878;
  svg { display: block; width: 100%; height: 100%; }
`;

const parts = [
  "AA_id6", "M6.00-55.00_id10", "M6.00-55.00_id14", "PBC25.00-26.00_id18", "PBA25.00-190.00_id22", "PBC25.00-26.00_id26",
  "PBA25.00-190.00_id30", "PBC25.00-26.00_id34", "PBA25.00-190.00_id38", "PBC25.00-26.00_id42", "PBA25.00-190.00_id46",
  "KBQ20.00_id50", "KBQ20.00_id54", "KBQ20.00_id58", "KBQ20.00_id62", "3D_id66", "M8.00-35.00_id70", "3D_id74",
  "M8.00-35.00_id78", "3D_id82", "M8.00-35.00_id86", "M8.00-35.00_id90", "3D_id94", "M8.00-35.00_id98", "3D_id102",
  "M5.00-25.00_id106", "3D_id110", "M5.00-25.00_id114", "3D_id118", "M5.00-25.00_id122", "3D_id126", "M5.00-25.00_id130",
];

const rail: { name: string; icon: React.ReactNode; h?: number; gap?: number; on?: boolean }[] = [
  { name: "设置", h: 26, icon: <Ic s={14}><g stroke="#333"><circle cx="8" cy="8" r="5" strokeWidth="1.700" /><path d="M8 0v2M8 14v2M0 8h2M14 8h2M2.500 2.500l1.500 1.500M12 12l1.500 1.500M13.500 2.500L12 4M4 12l-1.500 1.500" strokeWidth="1.500" /></g></Ic> },
  { name: "装配导航器", gap: 14, h: 45, on: true, icon: <Ic s={24} box={24}><path d="M3 2l4-1 3 1v4l3 1v4l-4 2-7-2V7l1-1z" fill="#f7cf3c" stroke="#b8860c" strokeWidth=".9" /><path d="M2 7l5 1v4M3 2l4 1v4M7 8l6-1" stroke="#b8860c" strokeWidth=".9" /><path d="M15 12h8M5 14v9M5 18h5" stroke="#111d8a" strokeWidth="1.200" /><path d="M13 17l3-2 5 1v5l-3 2-5-1z" fill="#f7cf3c" stroke="#b8860c" strokeWidth=".9" /></Ic> },
  { name: "约束导航器", icon: <Ic s={24} box={24}><path d="M4 1l7 5-7 5zM20 1l-7 5 7 5z" fill="#1424c8" /><path d="M12 0v24" stroke="#222" strokeDasharray="2 2" /><path d="M1 14h9v9H1z" fill="#ffe51c" stroke="#222" /><path d="M14 14v9h9z" fill="#d01616" stroke="#222" /></Ic> },
  { name: "部件导航器", icon: <Ic s={24} box={24}><path d="M2 3v7c2 2 7 2 9 0V3z" fill="#c95f98" stroke="#7a1e56" /><ellipse cx="6.500" cy="3" rx="4.500" ry="2" fill="#eba7c9" stroke="#7a1e56" /><path d="M14 9h9M6 13v10M6 18h5" stroke="#5a1a5a" strokeWidth="1.200" /><circle cx="17" cy="18" r="4" fill="#fff" stroke="#8a2a70" strokeWidth="1.300" /><circle cx="17" cy="18" r="1.500" fill="#8a2a70" /></Ic> },
  { name: "重用库", icon: <Ic s={24} box={24}><path d="M1 6l6-5h4L7 6v16H1z" fill="#f0861c" stroke="#9a4a0c" strokeWidth=".8" /><path d="M7 6l6-5h4l-4 5v16H7z" fill="#3cc83c" stroke="#147a18" strokeWidth=".8" /><path d="M13 6l6-4 5 0-1 16-4 4h-6z" fill="#3c8ef0" stroke="#12459a" strokeWidth=".8" /><path d="M13 6h6v16M19 6l5-4M1 18h6M7 18h6M14 9l4 1M14 14l4 1" stroke="#12459a" strokeWidth=".8" /><path d="M3 8v8M9 8v8" stroke="#fff" strokeWidth="1.200" /></Ic> },
  { name: "HD3D 工具", gap: 12, icon: <Ic s={24} box={24}><path d="M12 1c7 0 12 5 12 13M12 5c5 0 8 4 8 9M12 9c3 0 4 2 4 5" stroke="#1e5fd0" strokeWidth="1.700" /><circle cx="8" cy="16" r="7.500" fill="#1e7ae6" stroke="#0d469c" /><path d="M6.500 14.500H8v5m-2 0h4" stroke="#fff" strokeWidth="1.800" /><circle cx="8" cy="11.500" r="1.300" fill="#fff" /></Ic> },
  { name: "Web 浏览器", gap: 12, icon: <Ic s={22} box={24}><path d="M3 1h13l5 5v17H3z" fill="#fff" stroke="#2454a8" strokeWidth="1.300" /><path d="M16 1v5h5" fill="#d4e4f8" stroke="#2454a8" /><circle cx="12" cy="14" r="5.500" fill="#3a8ae0" stroke="#155a2a" /><path d="M8 16l4-6 3 2 1 5-4 2z" fill="#32b83a" /><path d="M12 10l-2 6h4z" fill="#e8f8e8" /></Ic> },
  { name: "历史记录", gap: 12, icon: <Ic s={23} box={24}><circle cx="12" cy="12" r="10.500" fill="#e9eef5" stroke="#6d7279" strokeWidth="2" /><path d="M12 5v8h6" stroke="#222" strokeWidth="1.700" /><path d="M12 3v1M12 20v1M3 12h1M20 12h1M6 6l.5.5M18 6l-.5.5M6 18l.5-.5M18 18l-.5-.5" stroke="#222" /></Ic> },
  { name: "系统材料", icon: <Ic s={24} box={24}><g strokeWidth="0"><path d="M2 1h9v4H2z" fill="#f02010" /><path d="M2 5h9v4H2z" fill="#ffb400" /><path d="M2 9h9v4H2z" fill="#e8f010" /><path d="M2 13h9v4H2z" fill="#20d050" /><path d="M2 17h9v3H2z" fill="#10b8e8" /><path d="M2 20h9v3H2z" fill="#2038e0" /></g><path d="M13 8l8 13" stroke="#111" strokeWidth="2.600" /><path d="M11 5l2 3" stroke="#fff" strokeWidth="2.600" /></Ic> },
  { name: "Process Studio", icon: <Ic s={24} box={24}><path d="M3 3c2-2 5-2 6 0v14c-2 2-5 2-6 0z" fill="#4f93dc" stroke="#1c4f94" strokeWidth=".9" /><path d="M10 7l13-3-3 4-5 1M14 11l6 1" stroke="#2d6cc0" strokeWidth="1.300" /><path d="M2 19l8-2 8-8" stroke="#3c78c8" strokeWidth="1.300" /><path d="M12 9l9 11" stroke="#111" strokeWidth="2.500" /><path d="M3 20h7M6 18v4" stroke="#f0b21c" strokeWidth="1.500" /></Ic> },
  { name: "加工向导", icon: <Ic s={24} box={24}><path d="M10 4l6-3 5 1 1 3-3-1-2 2-5 1z" fill="#a5acb2" stroke="#3f454a" /><path d="M14 6l-7 7 6 5" stroke="#4a5056" strokeWidth="4" /><path d="M14 6l-7 7 6 5" stroke="#b4babf" strokeWidth="2" /><circle cx="6.500" cy="13" r="2.500" fill="#d5d9dc" stroke="#444" /><path d="M8 20l10-2 1 3-10 2z" fill="#888" stroke="#333" /><path d="M3 18l5 1v4l-6-1z" fill="#f08a1c" /></Ic> },
];

/* ---------- 3D model ---------- */

const Fitting = ({ x, y }: { x: number; y: number }) => (
  <g transform={`translate(${x} ${y})`} stroke="#15150f" strokeWidth=".9">
    <path d="M-8-3l7-7 8 4 2 8-6 7-3-2-2 3-6-2z" fill="#b9b49c" />
    <path d="M-4-1l5-6 6 2M-4-1v9" fill="none" />
    <path d="M2-4l5-1 4 3-2 9-6-1-3-5z" fill="#6f6b5a" />
    <path d="M8-2l5 0 2 4-4 7-5-3z" fill="#b9b49c" />
    <path d="M12 0l4 0 2 4-4 6-4-3z" fill="#8d8972" />
    <ellipse cx="15" cy="6" rx="3.200" ry="4" fill="#cfc9b0" />
    <ellipse cx="15.500" cy="6" rx="1.300" ry="2" fill="#55513f" stroke="none" />
    <path d="M5-4l-2 9M10-1l-3 8" />
  </g>
);

const Screw = ({ x, y }: { x: number; y: number }) => (
  <g transform={`translate(${x} ${y})`}>
    <ellipse rx="16" ry="6.500" fill="#222" />
    <ellipse cy=".7" rx="15" ry="5.300" fill="#f6ee0a" />
    <path d="M-8 1l2-3 7-1 7 2 0 2-4 3h-8z" fill="#c8b800" stroke="#4d4a10" strokeWidth=".9" />
    <path d="M0-3v7M-4-1v4M4-2v5" stroke="#4d4a10" strokeWidth=".8" />
  </g>
);

const Model = () => (
  <svg viewBox="363 208 682 686" preserveAspectRatio="xMidYMid meet" role="img" aria-label="模架装配" fontFamily="Liberation Sans, sans-serif">
    <g stroke="#262626" strokeWidth="1" strokeLinejoin="round">
      {/* base plate */}
      <path d="M387 628l34-11 182 110 326-99 20 9-326 100z" fill="#fff" />
      <path d="M387 628v26l236 109v-26z" fill="#b5b3b5" />
      <path d="M623 737v26l326-100v-26z" fill="#d3d4d5" />
      {/* ejector space */}
      <path d="M443 570l126 50v91l-126-58z" fill="#fff" stroke="none" />
      <path d="M443 570h16v34l-16 6z" fill="#d8d8da" />
      <path d="M443 610l16-6v-25l110 48v41z" fill="#b5f5f7" stroke="none" />
      <path d="M443 610l125 57v19l-125-58z" fill="#68acae" />
      <path d="M443 628l125 58v21l-125-57z" fill="#8084a0" />
      <path d="M519 606c5 6 12 7 18 4l-6-5z" fill="#8a8890" />
      {[582, 592, 602].map((y) => (
        <g key={y}>
          <path d={`M458 ${y - 5}q8 12 47 2v8q-32 14-47 4z`} fill="#2b2bdc" stroke="#10105e" />
          <path d={`M470 ${y + 9}q10 2 20-1`} stroke="#c8b010" strokeWidth="1.500" fill="none" />
        </g>
      ))}
      <path d="M455 611l5-4 4 4-4 2zM491 613l14-9-2 9-8 4z" fill="#2b2bdc" stroke="#10105e" />
      {[625, 636, 647].map((y) => (
        <path key={y} d={`M549 ${y - 4}q8 6 19 5v9q-13 0-19-5z`} fill="#2b2bdc" stroke="#10105e" />
      ))}
      <path d="M560 662l8-3v5z" fill="#333" />
      {/* legs and lower block */}
      <path d="M407 556l36 16v81l-36-16z" fill="#b3b1b3" />
      <path d="M569 629l34 16v82l-34-16z" fill="#b3b1b3" />
      <path d="M603 645l326-100v83l-326 99z" fill="#d6d6d8" />
      {/* cavity plates */}
      <path d="M407 482v74l196 89v-74z" fill="#bf9a22" />
      <path d="M603 571v74l326-100v-74z" fill="#d4ab26" />
      <path d="M407 416v66l196 89v-66z" fill="#127479" />
      <path d="M603 505v66l326-100v-66z" fill="#12838a" />
      <path d="M407 482l196 89 326-100" fill="none" strokeWidth="2" />
      <path d="M407 386v30l196 89v-30z" fill="#b28e80" />
      <path d="M603 475v30l326-100v-20z" fill="#cda997" />
      {/* side slot */}
      <path d="M739 530l12-4v26l-3 4-9 3z" fill="#6ea052" />
      <path d="M849 496l11-3v30l-11 3z" fill="#6ea052" />
      <path d="M844 487l5-2v41l-5-4z" fill="#3d7a52" />
      <path d="M751 546l93-28 7 8-103 32z" fill="#ffff38" strokeWidth=".6" />
      <path d="M751 515l93-28v31l-93 28z" fill="#7f6a4c" />
      <path d="M766 541l8-2v6h-7zM809 528l8-2v6h-7z" fill="#1c78c8" strokeWidth=".7" />
      {/* side holes */}
      <ellipse cx="505" cy="493" rx="5.500" ry="9" fill="#1d9aa0" transform="rotate(-10 505 493)" />
      <ellipse cx="506" cy="495" rx="4" ry="6.500" fill="#35d0d8" stroke="none" transform="rotate(-10 506 495)" />
      <ellipse cx="505" cy="563" rx="5.500" ry="9" fill="#c8a820" transform="rotate(-10 505 563)" />
      <ellipse cx="506" cy="565" rx="4" ry="6.500" fill="#fff04a" stroke="none" transform="rotate(-10 506 565)" />
      {/* clamping plate */}
      <path d="M713 241l236 109-326 99-236-108z" fill="#fff" />
      <path d="M387 341v39l236 108v-39z" fill="#bab9bb" />
      <path d="M623 449v39l326-99v-39z" fill="#d6d7d8" />
      {[[451, 352], [730, 267], [885, 339], [608, 424]].map(([x, y]) => (
        <ellipse key={x} cx={x} cy={y} rx="16" ry="6.200" fill="#8080f8" />
      ))}
    </g>
    <Screw x={503} y={353} />
    <Screw x={720} y={286} />
    <Screw x={834} y={338} />
    <Screw x={616} y={405} />
    {/* locating ring */}
    <g stroke="#0d2c22">
      <path d="M622 337v9c2 22 90 22 93 0v-9z" fill="#0b8660" />
      <ellipse cx="668.500" cy="337" rx="46.500" ry="17.500" fill="#0aa67c" />
      <ellipse cx="668.500" cy="338" rx="33.500" ry="13.500" fill="#0b7d5c" />
      <path d="M638 344c12-13 50-13 61 0-8 9-50 10-61 0z" fill="#fff" stroke="none" />
      <path d="M654 347c5-5 25-5 30 0-6 4-24 4-30 0z" fill="#93bd3c" />
      <path d="M656 346l7-2 2 5-6 1z" fill="#1b3a20" />
      <path d="M668 344v6" />
      <path d="M640 325l5-3 4 3-5 2zM690 348l5-3 4 3-5 2z" fill="#1b3a20" />
      <path d="M629 352l7 2v4l-7-2z" fill="#536a14" />
    </g>
    <Fitting x={745} y={485} />
    <Fitting x={789} y={471} />
    <Fitting x={745} y={582} />
    <Fitting x={789} y={568} />
    <path d="M615 733l8 4 10-5M618 735l9-4M625 733h8" stroke="#222" strokeDasharray="1 1" fill="none" />
    {/* work coordinate system */}
    <path d="M668 424l2.500 14-2 34-3-34z" fill="#6580d0" stroke="#3a56a8" strokeWidth=".5" />
    <path d="M673 474l28-10 12-1-13 6z" fill="#9bd0a0" stroke="#5aa060" strokeWidth=".5" />
    <path d="M701 462v7" stroke="#2f8a3a" />
    <path d="M673 477l23 6 9 9-15-4z" fill="#e08888" stroke="#b05050" strokeWidth=".5" />
    <g fontSize="13">
      <text x="673" y="423" fill="#1c4ef0">ZC</text>
      <text x="696" y="459" fill="#3c9a48">YC</text>
      <text x="689" y="506" fill="#e03030">XC</text>
    </g>
    {/* view triad */}
    <path d="M425 877l17-6 18 7v20h-35z" fill="#cfd0d3" stroke="#9a9c9e" />
    <path d="M425 877l17 7 18-6M442 884v14" stroke="#9a9c9e" fill="none" />
    <path d="M424 870v26" stroke="#1038c8" strokeWidth="3" />
    <path d="M424 861l3 11h-6z" fill="#1038c8" />
    <path d="M446 896l16-8M460 885l3 3-1 3" stroke="#2f9a3a" fill="none" />
    <text x="420" y="861" fontSize="12" fill="#1c4ef0">Z</text>
  </svg>
);

/* ---------- page ---------- */

export default function App() {
  return (
    <Shell>
      <Global />
      <TitleBar>
        <Logo>NX</Logo>
        <Rule />
        <QuickButton $w={34} aria-label="保存"><Disk /></QuickButton>
        <Rule />
        <QuickButton $w={26} aria-label="撤消"><Undo /></QuickButton>
        <QuickButton $w={10} aria-label="撤消列表"><Svg width={6} height={4} viewBox="0 0 6 4"><path d="M0 0h6L3 3z" fill="#aaa" /></Svg></QuickButton>
        <QuickButton $w={27} aria-label="重做"><Undo flip /></QuickButton>
        <Rule />
        <QuickButton $w={27} aria-label="剪切"><Cut /></QuickButton>
        <QuickButton $w={22} aria-label="复制"><Copy /></QuickButton>
        <QuickButton $w={25} aria-label="粘贴"><Paste /></QuickButton>
        <Rule />
        <QuickButton $w={26} aria-label="打开"><Folder /></QuickButton>
        <QuickButton $w={12} aria-label="最近打开"><Down /></QuickButton>
        <Rule />
        <QuickButton $w={31} aria-label="触控"><Hand /></QuickButton>
        <Rule $m={2} />
        <QuickText><SwitchWin />切换窗口</QuickText>
        <QuickText><WinIcon />窗口<Down /></QuickText>
        <QuickButton $w={8} aria-label="自定义"><Down line /></QuickButton>
        <AppName>NX 1</AppName>
      </TitleBar>

      <TabBar>
        <FileTab>文件(F)</FileTab>
        {["主页", "装配", "曲线", "分析", "视图", "渲染", "工具", "应用模块"].map((t, i) => (
          <Tab key={t} $on={i === 0}>{t}</Tab>
        ))}
      </TabBar>

      <Ribbon>
        <Group name="直接草图" w={176} pad={9}>
          <Big icon={<Sketch />} label="草图" w={36} />
          <Gallery>
            {sketchTools.map(([name, icon]) => <GalleryButton key={name} aria-label={name}>{icon}</GalleryButton>)}
          </Gallery>
          <GalleryScroll>
            <ScrollButton aria-label="上一行"><Up /></ScrollButton>
            <ScrollButton aria-label="下一行"><Down /></ScrollButton>
            <ScrollButton aria-label="全部曲线"><Down line /></ScrollButton>
          </GalleryScroll>
        </Group>
        <Group name="特征" w={369} pad={11}>
          <Big icon={<Datum />} label="基准平面" w={46} arrow />
          <Big icon={<Extrude />} label="拉伸" w={46} arrow />
          <Big icon={<Hole />} label="孔" w={34} />
          <SmallCol $l={10} $w={66}>
            <Small icon={<Pattern />} label="阵列特征" />
            <Small icon={<Unite />} label="合并" arrow />
            <Small icon={<ShellIc />} label="抽壳" />
          </SmallCol>
          <Big icon={<Blend />} label="边倒圆" w={46} arrow />
          <SmallCol $l={3} $w={63}>
            <Small icon={<Chamfer />} label="倒斜角" />
            <Small icon={<Trim />} label="修剪体" />
            <Small icon={<Draft />} label="拔模" />
          </SmallCol>
          <Big icon={<MoreBox><MoreFeature /></MoreBox>} label="更多" w={40} arrow />
        </Group>
        <Group name="同步建模" w={172} pad={5}>
          <Big icon={<MoveFace />} label="移动面" w={46} />
          <SmallCol $l={3} $w={74}>
            <Small icon={<SyncCube kind="offset" />} label="偏置区域" />
            <Small icon={<SyncCube kind="replace" />} label="替换面" />
            <Small icon={<SyncCube kind="delete" />} label="删除面" />
          </SmallCol>
          <Big icon={<MoreBox><MoreSync /></MoreBox>} label="更多" w={40} arrow />
        </Group>
        <Group name="标准化工具 - G..." w={104} left>
          <Tools rows={[["assemblyFrame", "layers", "layerDoc", "|", "tag"], ["blockCheck", "hammerCheck", "cubesCheck", "|", "cubeEdit"]]} />
        </Group>
        <Group name="齿轮..." w={52} left>
          <Tools rows={[["gear1", "gear2"], ["handList"]]} />
        </Group>
        <Group name="弹簧..." w={58} left>
          <Tools rows={[["coil", "damper"], ["springGold", "|", "springCut"]]} />
        </Group>
        <Group name="加工..." w={52} left>
          <Tools rows={[["bigCheck", "process"], ["gridPart", "axes"]]} />
        </Group>
        <Group name="建模工具 - G..." w={110} left>
          <Tools rows={[["triangle", "tableTri", "folderPlus"], ["note", "brush", "|", "tree"]]} />
        </Group>
      </Ribbon>

      <SelectionBar>
        <MenuButton>{tool.menu}<span>菜单(<u>M</u>)</span><Down /></MenuButton>
        <Rule />
        <Picker $w={133} $l={12}>
          <select aria-label="选择过滤器"><option>无选择过滤器</option></select>
          <Down />
        </Picker>
        <Picker $w={140} $l={9}>
          <select aria-label="选择范围"><option>整个装配</option></select>
          <Down />
        </Picker>
        <Snaps>
          <SnapButton aria-label="selParts">{tool.selParts}</SnapButton>
          <SnapButton aria-label="selFunnel">{tool.selFunnel}</SnapButton>
          <SnapButton $w={20} aria-label="selBox">{tool.selBox}</SnapButton>
          <SnapButton $w={10} aria-label="selBox 列表"><Down /></SnapButton>
          <SnapButton aria-label="rotMove">{tool.rotMove}</SnapButton>
          <SnapButton aria-label="gridMove">{tool.gridMove}</SnapButton>
          <SnapButton aria-label="cubeTarget">{tool.cubeTarget}</SnapButton>
          <SnapButton aria-label="marquee">{tool.marquee}</SnapButton>
          <SnapButton $w={10} aria-label="marquee 列表"><Down /></SnapButton>
          <SnapButton aria-label="faceGray">{tool.faceGray}</SnapButton>
          <SnapButton aria-label="cubeBlue">{tool.cubeBlue}</SnapButton>
          {snapItems.map(([n, on]) => <SnapButton key={n} $on={on} aria-label={n}>{tool[n]}</SnapButton>)}
          <Rule $m={5} />
          <SnapButton aria-label="search">{tool.search}</SnapButton>
          <SnapButton aria-label="picture">{tool.picture}</SnapButton>
        </Snaps>
      </SelectionBar>

      <Body>
        <Rail>
          {rail.map((r) => <RailButton key={r.name} aria-label={r.name} $h={r.h} $gap={r.gap} $on={r.on}>{r.icon}</RailButton>)}
        </Rail>
        <Panel>
          <PanelHead>
            <h2>装配导航器</h2>
            <Maximize aria-label="最大化" />
          </PanelHead>
          <TreeFrame>
            <TreeClip>
              <Tree>
                <colgroup>
                  <col width={231} />
                  <col width={36} />
                  <col width={24} />
                  <col />
                </colgroup>
                <thead>
                  <tr>
                    <th>描述性部件名<Svg width={10} height={5} viewBox="0 0 10 5"><path d="M0 5h10L5 0z" fill="#111" /></Svg></th>
                    <th>信息</th>
                    <th>只</th>
                    <th>已</th>
                  </tr>
                </thead>
                <tbody>
                  <tr>
                    <td>
                      <NameCell>
                        <Minus aria-label="折叠" />
                        <Check id="root" defaultChecked />
                        <PartLabel $root htmlFor="root"><Assembly />3D_x_t&nbsp; (顺序：时间顺序)</PartLabel>
                      </NameCell>
                    </td>
                    <td />
                    <td><Slot $disk><Disk s={14} /></Slot></td>
                    <td />
                  </tr>
                  {parts.map((p) => (
                    <tr key={p}>
                      <td>
                        <NameCell>
                          <Elbow />
                          <Check id={p} defaultChecked />
                          <PartLabel htmlFor={p}><Part />{p}_x_t</PartLabel>
                        </NameCell>
                      </td>
                      <td />
                      <td><Slot /></td>
                      <td />
                    </tr>
                  ))}
                </tbody>
              </Tree>
            </TreeClip>
            <VScroll>
              <Arrow aria-label="向上滚动"><Ic s={8} box={8}><path d="M1 5l3-3 3 3" stroke="#444" strokeWidth="1.800" /></Ic></Arrow>
              <Arrow aria-label="向下滚动"><Ic s={8} box={8}><path d="M1 3l3 3 3-3" stroke="#444" strokeWidth="1.800" /></Ic></Arrow>
            </VScroll>
            <HScroll>
              <HArrow aria-label="向左滚动"><Ic s={8} box={8}><path d="M5 1L2 4l3 3" stroke="#444" strokeWidth="1.800" /></Ic></HArrow>
              <HArrow aria-label="向右滚动"><Ic s={8} box={8}><path d="M3 1l3 3-3 3" stroke="#444" strokeWidth="1.800" /></Ic></HArrow>
            </HScroll>
          </TreeFrame>
        </Panel>
        <Workspace>
          <DocTabs>
            <DocTab>
              <Ic s={16}><path d="M2 3l4-2 4 2v5l5 1v3l-6 3-7-3z" fill="#2f62e0" stroke="#0e2f96" /><path d="M2 3l4 2v6l5 2" stroke="#a9c4fb" /></Ic>
              3D_x_t.prt
              <button aria-label="关闭"><Ic s={9} box={9}><path d="M1 1l7 7M8 1L1 8" stroke="#fff" strokeWidth="2" /></Ic></button>
            </DocTab>
          </DocTabs>
          <Canvas><Model /></Canvas>
        </Workspace>
      </Body>
    </Shell>
  );
}
